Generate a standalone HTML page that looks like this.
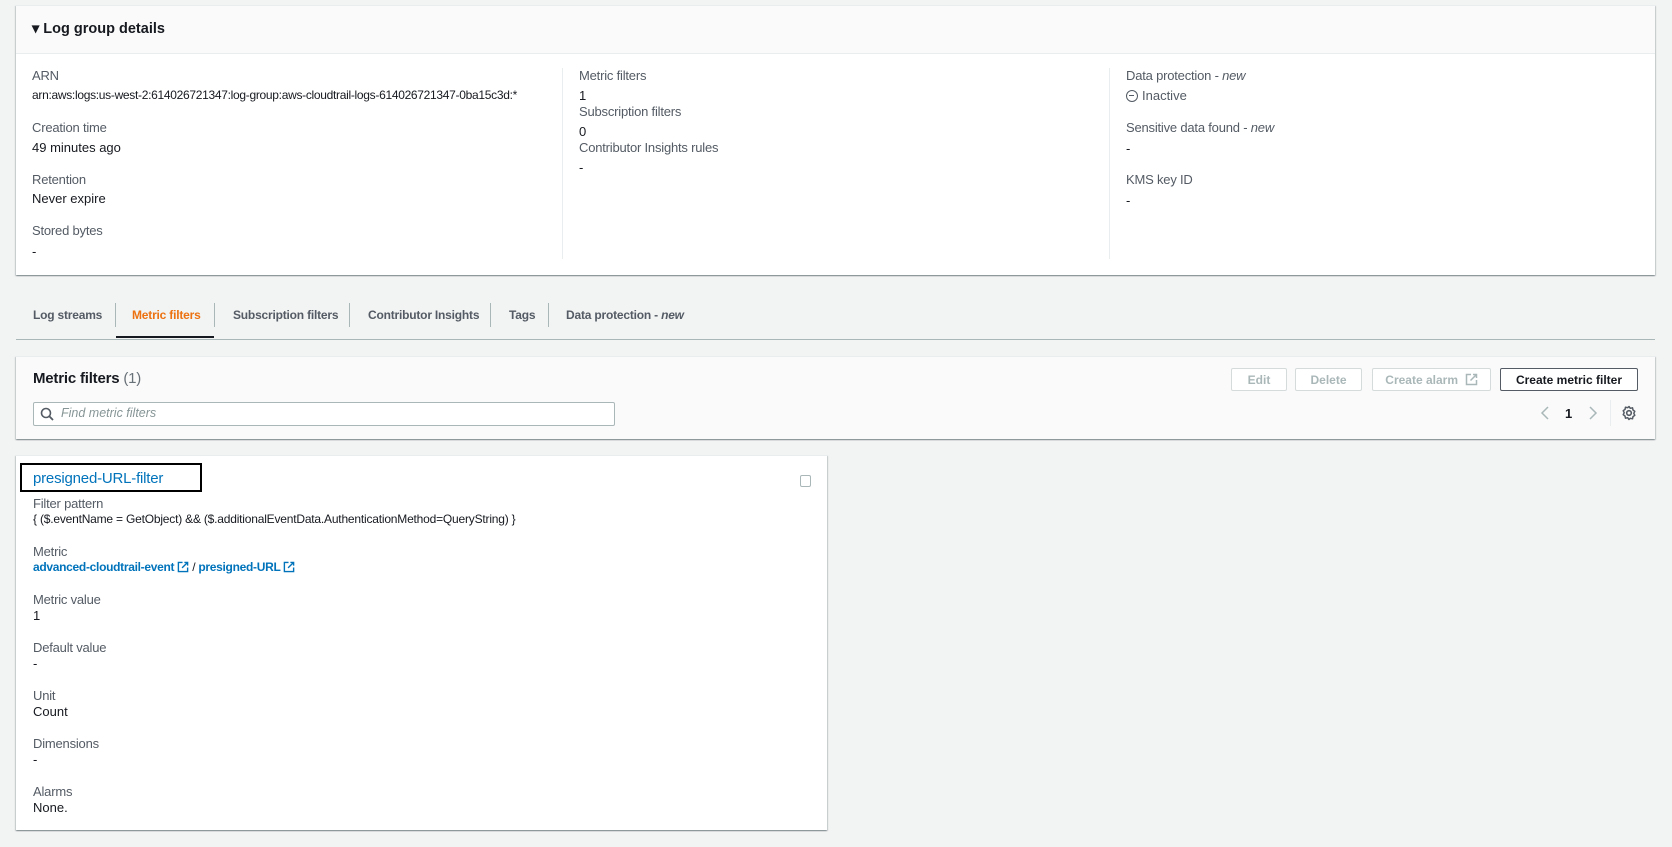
<!DOCTYPE html>
<html><head><meta charset="utf-8"><style>
*{box-sizing:border-box;margin:0;padding:0}
body{width:1672px;height:847px;background:#f2f3f3;font-family:"Liberation Sans",sans-serif;font-size:13px;color:#16191f;position:relative;overflow:hidden}
.abs{position:absolute;white-space:nowrap}
.panel{position:absolute;background:#fff;box-shadow:0 1px 1px 0 rgba(0,28,36,.3),1px 1px 1px 0 rgba(0,28,36,.15),-1px 1px 1px 0 rgba(0,28,36,.15);border-top:1px solid #eaeded}
.lbl{color:#545b64;letter-spacing:-0.2px}
.link{color:#0073bb}
.b{font-weight:bold}
.tab{font-weight:bold;font-size:12px;letter-spacing:-0.2px;color:#545b64}
.btn{position:absolute;height:23px;border:1px solid #d5dbdb;background:#fff;color:#aab7b8;font-weight:bold;font-size:12px;display:flex;align-items:center;justify-content:center;border-radius:2px}
</style></head><body>

<div class="panel" style="left:16px;top:5px;width:1639px;height:270px">
  <div style="height:48px;background:#fafafa;border-bottom:1px solid #eaeded"></div>
</div>
<div class="abs b" style="left:32px;top:21px;font-size:14.5px">▾ Log group details</div>
<div class="abs" style="left:562px;top:68px;width:1px;height:191px;background:#eaeded"></div>
<div class="abs" style="left:1109px;top:68px;width:1px;height:191px;background:#eaeded"></div>

<div class="abs lbl" style="left:32px;top:68px">ARN</div>
<div class="abs" style="left:32px;top:88px;font-size:12px;letter-spacing:-0.3px">arn:aws:logs:us-west-2:614026721347:log-group:aws-cloudtrail-logs-614026721347-0ba15c3d:*</div>
<div class="abs lbl" style="left:32px;top:120px">Creation time</div>
<div class="abs" style="left:32px;top:140px">49 minutes ago</div>
<div class="abs lbl" style="left:32px;top:172px">Retention</div>
<div class="abs" style="left:32px;top:191px">Never expire</div>
<div class="abs lbl" style="left:32px;top:223px">Stored bytes</div>
<div class="abs" style="left:32px;top:244px">-</div>

<div class="abs lbl" style="left:579px;top:68px">Metric filters</div>
<div class="abs" style="left:579px;top:88px">1</div>
<div class="abs lbl" style="left:579px;top:104px">Subscription filters</div>
<div class="abs" style="left:579px;top:124px">0</div>
<div class="abs lbl" style="left:579px;top:140px">Contributor Insights rules</div>
<div class="abs" style="left:579px;top:160px">-</div>

<div class="abs lbl" style="left:1126px;top:68px">Data protection - <i>new</i></div>
<div class="abs" style="left:1126px;top:88px;color:#545b64"><span style="display:inline-block;width:12px;height:12px;border:1.5px solid #545b64;border-radius:50%;vertical-align:-2px;position:relative;margin-right:4px"><span style="position:absolute;left:2px;top:3.5px;width:5px;height:1.5px;background:#545b64"></span></span>Inactive</div>
<div class="abs lbl" style="left:1126px;top:120px">Sensitive data found - <i>new</i></div>
<div class="abs" style="left:1126px;top:141px">-</div>
<div class="abs lbl" style="left:1126px;top:172px">KMS key ID</div>
<div class="abs" style="left:1126px;top:193px">-</div>

<!-- tabs -->
<div class="abs tab" style="left:33px;top:308px">Log streams</div>
<div class="abs" style="left:115px;top:303px;width:1px;height:24px;background:#aab7b8"></div>
<div class="abs tab" style="left:132px;top:308px;color:#ec7211">Metric filters</div>
<div class="abs" style="left:116px;top:336px;width:98px;height:2px;background:#16191f"></div>
<div class="abs" style="left:214px;top:303px;width:1px;height:24px;background:#aab7b8"></div>
<div class="abs tab" style="left:233px;top:308px">Subscription filters</div>
<div class="abs" style="left:349px;top:303px;width:1px;height:24px;background:#aab7b8"></div>
<div class="abs tab" style="left:368px;top:308px">Contributor Insights</div>
<div class="abs" style="left:490px;top:303px;width:1px;height:24px;background:#aab7b8"></div>
<div class="abs tab" style="left:509px;top:308px">Tags</div>
<div class="abs" style="left:548px;top:303px;width:1px;height:24px;background:#aab7b8"></div>
<div class="abs tab" style="left:566px;top:308px">Data protection - <i>new</i></div>
<div class="abs" style="left:16px;top:339px;width:1639px;height:1px;background:#aab7b8"></div>

<!-- metric filters panel -->
<div class="panel" style="left:16px;top:356px;width:1639px;height:83px;background:#fafafa"></div>
<div class="abs b" style="left:33px;top:370px;font-size:15px;letter-spacing:-0.2px">Metric filters <span style="font-weight:normal;color:#687078">(1)</span></div>
<div class="abs" style="left:33px;top:402px;width:582px;height:24px;border:1px solid #aab7b8;background:#fff;border-radius:2px"></div>
<svg class="abs" style="left:40px;top:407px" width="14" height="14" viewBox="0 0 14 14"><circle cx="6" cy="6" r="4.5" fill="none" stroke="#545b64" stroke-width="1.6"/><path d="M9.3 9.3L13 13" stroke="#545b64" stroke-width="1.8"/></svg>
<div class="abs" style="left:61px;top:406px;font-style:italic;color:#879596;font-size:12.5px">Find metric filters</div>

<div class="btn" style="left:1231px;top:368px;width:56px">Edit</div>
<div class="btn" style="left:1295px;top:368px;width:67px">Delete</div>
<div class="btn" style="left:1372px;top:368px;width:119px">Create alarm &nbsp;<svg width="13" height="13" viewBox="0 0 13 13"><path d="M6 1.5H1.5v10h10V7M8 1.5h3.5V5M11.5 1.5L5.5 7.5" fill="none" stroke="#aab7b8" stroke-width="1.5"/></svg></div>
<div class="btn" style="left:1500px;top:368px;width:138px;border-color:#545b64;color:#16191f">Create metric filter</div>

<svg class="abs" style="left:1540px;top:406px" width="10" height="14" viewBox="0 0 10 14"><path d="M8 1L2 7l6 6" fill="none" stroke="#aab7b8" stroke-width="1.5"/></svg>
<div class="abs b" style="left:1565px;top:406px">1</div>
<svg class="abs" style="left:1588px;top:406px" width="10" height="14" viewBox="0 0 10 14"><path d="M2 1l6 6-6 6" fill="none" stroke="#aab7b8" stroke-width="1.5"/></svg>
<div class="abs" style="left:1610px;top:400px;width:1px;height:26px;background:#eaeded"></div>
<svg class="abs" style="left:1621px;top:405px" width="16" height="16" viewBox="0 0 16 16"><circle cx="8" cy="8" r="2.3" fill="none" stroke="#545b64" stroke-width="1.6"/><path d="M8 1.5l1.3 1.8 2.2-.5.5 2.2 1.8 1.3-1 2 1 2-1.8 1.3-.5 2.2-2.2-.5L8 14.5l-1.3-1.8-2.2.5-.5-2.2L2.2 9.7l1-2-1-2 1.8-1.3.5-2.2 2.2.5z" fill="none" stroke="#545b64" stroke-width="1.5" stroke-linejoin="round"/></svg>

<!-- card -->
<div class="panel" style="left:16px;top:455px;width:811px;height:375px"></div>
<div class="abs" style="left:20px;top:463px;width:182px;height:29px;border:2px solid #000"></div>
<div class="abs link" style="left:33px;top:470px;font-size:15px;letter-spacing:-0.2px">presigned-URL-filter</div>
<div class="abs" style="left:800px;top:475px;width:11px;height:12px;border:1px solid #aab7b8;border-radius:2px"></div>

<div class="abs lbl" style="left:33px;top:496px">Filter pattern</div>
<div class="abs" style="left:33px;top:512px;font-size:12px;letter-spacing:-0.2px">{ ($.eventName = GetObject) &amp;&amp; ($.additionalEventData.AuthenticationMethod=QueryString) }</div>
<div class="abs lbl" style="left:33px;top:544px">Metric</div>
<div class="abs link b" style="left:33px;top:560px;font-size:12px;letter-spacing:-0.3px">advanced-cloudtrail-event <svg width="12" height="12" viewBox="0 0 13 13" style="vertical-align:-2px"><path d="M6 1.5H1.5v10h10V7M8 1.5h3.5V5M11.5 1.5L5.5 7.5" fill="none" stroke="#0073bb" stroke-width="1.5"/></svg> <span style="color:#16191f;font-weight:normal">/</span> presigned-URL <svg width="12" height="12" viewBox="0 0 13 13" style="vertical-align:-2px"><path d="M6 1.5H1.5v10h10V7M8 1.5h3.5V5M11.5 1.5L5.5 7.5" fill="none" stroke="#0073bb" stroke-width="1.5"/></svg></div>
<div class="abs lbl" style="left:33px;top:592px">Metric value</div>
<div class="abs" style="left:33px;top:608px">1</div>
<div class="abs lbl" style="left:33px;top:640px">Default value</div>
<div class="abs" style="left:33px;top:656px">-</div>
<div class="abs lbl" style="left:33px;top:688px">Unit</div>
<div class="abs" style="left:33px;top:704px">Count</div>
<div class="abs lbl" style="left:33px;top:736px">Dimensions</div>
<div class="abs" style="left:33px;top:752px">-</div>
<div class="abs lbl" style="left:33px;top:784px">Alarms</div>
<div class="abs" style="left:33px;top:800px">None.</div>
</body></html>
